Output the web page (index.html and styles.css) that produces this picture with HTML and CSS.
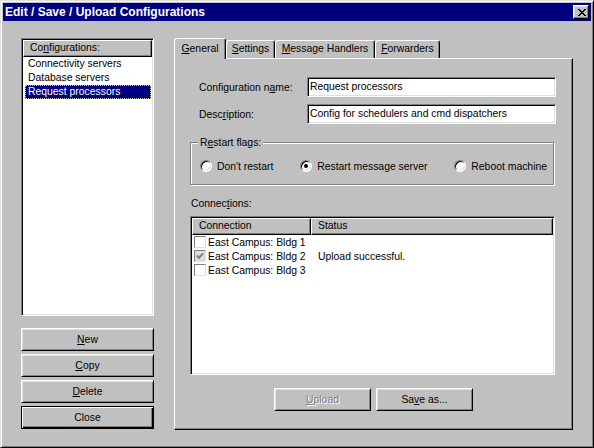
FILE: index.html
```html
<!DOCTYPE html>
<html>
<head>
<meta charset="utf-8">
<title>Edit / Save / Upload Configurations</title>
<link rel="stylesheet" href="styles.css">
</head>
<body>
<div class="window">
  <div class="titlebar">
    <span class="title">Edit / Save / Upload Configurations</span>
    <span class="close-btn"><svg width="8" height="7" viewBox="0 0 8 7" shape-rendering="crispEdges"><path fill="#000" d="M0 0h2v1H0z M6 0h2v1H6z M1 1h2v1H1z M5 1h2v1H5z M2 2h4v1H2z M3 3h2v1H3z M2 4h4v1H2z M1 5h2v1H1z M5 5h2v1H5z M0 6h2v1H0z M6 6h2v1H6z"/></svg></span>
  </div>
  <div class="content">
    <div class="left">
      <div class="listbox">
        <div class="lb-header">Co<u>n</u>figurations:</div>
        <div class="lb-item">Connectivity servers</div>
        <div class="lb-item">Database servers</div>
        <div class="lb-item selected">Request processors</div>
      </div>
      <div class="btn-stack">
        <div class="btn"><u>N</u>ew</div>
        <div class="btn"><u>C</u>opy</div>
        <div class="btn"><u>D</u>elete</div>
        <div class="btn default">Close</div>
      </div>
    </div>
    <div class="tabctl">
      <div class="tabs">
        <div class="tab active tab-general"><u>G</u>eneral</div>
        <div class="tab tab-settings"><u>S</u>ettings</div>
        <div class="tab tab-handlers"><u>M</u>essage Handlers</div>
        <div class="tab tab-forwarders"><u>F</u>orwarders</div>
      </div>
      <div class="panel">
        <div class="field-row first">
          <span class="field-label">Configuration n<u>a</u>me:</span>
          <span class="textbox">Request processors</span>
        </div>
        <div class="field-row">
          <span class="field-label">Desc<u>r</u>iption:</span>
          <span class="textbox">Config for schedulers and cmd dispatchers</span>
        </div>
        <div class="group">
          <div class="group-label">R<u>e</u>start flags:</div>
          <div class="radio-row">
            <span class="radio-item"><span class="radio"></span>Don't restart</span>
            <span class="radio-item"><span class="radio checked"></span>Restart message server</span>
            <span class="radio-item"><span class="radio"></span>Reboot machine</span>
          </div>
        </div>
        <div class="conn-label">Connec<u>t</u>ions:</div>
        <div class="listview">
          <div class="lv-header">
            <div class="lv-hcell">Connection</div>
            <div class="lv-hcell">Status</div>
          </div>
          <div class="lv-row">
            <div class="lv-cell first"><span class="check"></span>East Campus: Bldg 1</div>
            <div class="lv-cell second"></div>
          </div>
          <div class="lv-row">
            <div class="lv-cell first"><span class="check checked"><svg width="8" height="8" viewBox="0 0 8 8"><polyline points="0.8,3.6 3,5.8 7.2,1.4" fill="none" stroke="#808080" stroke-width="2"/></svg></span>East Campus: Bldg 2</div>
            <div class="lv-cell second">Upload successful.</div>
          </div>
          <div class="lv-row">
            <div class="lv-cell first"><span class="check"></span>East Campus: Bldg 3</div>
            <div class="lv-cell second"></div>
          </div>
        </div>
        <div class="panel-buttons">
          <div class="btn wide disabled"><u>U</u>pload</div>
          <div class="btn wide">Sa<u>v</u>e as...</div>
        </div>
      </div>
    </div>
  </div>
</div>
</body>
</html>
```
FILE: styles.css
```css
* { box-sizing: border-box; }
html, body { margin: 0; padding: 0; }
body {
  background: #c0c0c0;
  font-family: "Liberation Sans", Arial, sans-serif;
  font-size: 10.4px;
  color: #000;
}
u { text-decoration: underline; text-underline-offset: 1px; }

.window {
  width: 594px;
  height: 448px;
  border: 1px solid;
  border-color: #dfdfdf #000 #000 #dfdfdf;
  box-shadow: inset 1px 1px #fff, inset -1px -1px #808080;
  padding: 2px;
  display: flex;
  flex-direction: column;
  background: #c0c0c0;
}

.titlebar {
  height: 18px;
  background: #000080;
  display: flex;
  align-items: center;
  justify-content: space-between;
  padding: 0 2px;
}
.title {
  color: #fff;
  font-weight: bold;
  font-size: 12px;
  line-height: 18px;
}
.close-btn {
  width: 16px;
  height: 14px;
  background: #c0c0c0;
  border: 1px solid;
  border-color: #fff #000 #000 #fff;
  box-shadow: inset -1px -1px #808080, inset 1px 1px #dfdfdf;
  display: flex;
  align-items: center;
  justify-content: center;
  padding-left: 1px;
}
.close-btn svg { display: block; }

.content {
  display: flex;
  gap: 20px;
  padding: 17px 0 0 18px;
}

.left {
  width: 133px;
  display: flex;
  flex-direction: column;
}

.listbox {
  height: 278px;
  background: #fff;
  border: 1px solid;
  border-color: #808080 #fff #fff #808080;
  box-shadow: inset 1px 1px #000, inset -1px -1px #dfdfdf;
  padding: 1px;
}
.lb-header {
  height: 17px;
  background: #c0c0c0;
  border: 1px solid;
  border-color: #fff #000 #000 #fff;
  box-shadow: inset -1px -1px #808080;
  padding-left: 6px;
  line-height: 14px;
}
.lb-item {
  height: 14px;
  margin: 0 1px 0 2px;
  border: 1px dotted transparent;
  padding-left: 2px;
  line-height: 12px;
  white-space: nowrap;
}
.lb-item.selected {
  background: #000080;
  color: #fff;
  border-color: #c8c8a0;
}

.btn-stack {
  margin-top: 12px;
  display: flex;
  flex-direction: column;
  gap: 3px;
}
.btn {
  height: 23px;
  background: #c0c0c0;
  border: 1px solid;
  border-color: #fff #000 #000 #fff;
  box-shadow: inset 1px 1px #dfdfdf, inset -1px -1px #808080;
  display: flex;
  align-items: center;
  justify-content: center;
  white-space: nowrap;
}
.btn.default {
  border-color: #000;
  box-shadow: inset 1px 1px #fff, inset -1px -1px #000, inset -2px -2px #808080;
}
.btn.wide { width: 97px; }
.btn.disabled {
  color: #808080;
  text-shadow: 1px 1px #fff;
}

.tabctl {
  width: 399px;
  display: flex;
  flex-direction: column;
}
.tabs {
  height: 20px;
  display: flex;
  align-items: flex-end;
}
.tab {
  height: 18px;
  background: #c0c0c0;
  border-left: 1px solid #fff;
  border-top: 1px solid #fff;
  border-right: 1px solid #000;
  box-shadow: inset -1px 0 #808080;
  border-radius: 3px 3px 0 0;
  text-align: center;
  line-height: 14px;
  padding-top: 1px;
  white-space: nowrap;
}
.tab.active {
  height: 21px;
  margin-bottom: -1px;
  position: relative;
  z-index: 1;
  padding-top: 3px;
}
.tab-general { width: 52px; }
.tab-settings { width: 49px; }
.tab-handlers { width: 100px; }
.tab-forwarders { width: 65px; }

.panel {
  height: 372px;
  border: 1px solid;
  border-color: #fff #000 #000 #fff;
  box-shadow: inset -1px -1px #808080;
  display: flex;
  flex-direction: column;
}

.field-row {
  display: flex;
  align-items: center;
  margin: 7px 0 0 24px;
}
.field-row.first { margin-top: 18px; }
.field-label { width: 108px; white-space: nowrap; }
.textbox {
  width: 249px;
  height: 20px;
  background: #fff;
  border: 1px solid;
  border-color: #808080 #fff #fff #808080;
  box-shadow: inset 1px 1px #000, inset -1px -1px #dfdfdf;
  padding-left: 2px;
  line-height: 18px;
  white-space: nowrap;
  overflow: hidden;
}

.group {
  margin: 18px 0 0 15px;
  width: 364px;
  border: 1px solid #808080;
  box-shadow: inset 1px 1px #fff, 1px 1px #fff;
  padding-bottom: 11px;
}
.group-label {
  width: fit-content;
  margin: -7px 0 0 7px;
  padding: 0 2px;
  background: #c0c0c0;
  line-height: 13px;
}
.radio-row {
  margin-top: 10px;
  height: 14px;
  display: flex;
  justify-content: space-between;
  padding: 0 6px 0 9px;
}
.radio-item {
  display: flex;
  align-items: center;
  gap: 5px;
  white-space: nowrap;
}
.radio {
  width: 12px;
  height: 12px;
  border-radius: 50%;
  background: #fff;
  border: 1px solid;
  border-color: #808080 #fff #fff #808080;
  box-shadow: inset 1px 1px #000, inset -1px -1px #dfdfdf;
  display: flex;
  align-items: center;
  justify-content: center;
}
.radio.checked::after {
  content: "";
  width: 4px;
  height: 4px;
  border-radius: 50%;
  background: #000;
}

.conn-label {
  margin: 12px 0 0 16px;
  line-height: 13px;
}
.listview {
  margin: 6px 0 0 15px;
  width: 365px;
  height: 159px;
  background: #fff;
  border: 1px solid;
  border-color: #808080 #fff #fff #808080;
  box-shadow: inset 1px 1px #000, inset -1px -1px #dfdfdf;
  padding: 1px;
}
.lv-header {
  display: grid;
  grid-template-columns: 119px 1fr;
  height: 17px;
}
.lv-hcell {
  background: #c0c0c0;
  border: 1px solid;
  border-color: #fff #000 #000 #fff;
  box-shadow: inset -1px -1px #808080;
  padding-left: 6px;
  line-height: 14px;
}
.lv-row {
  display: grid;
  grid-template-columns: 119px 1fr;
  height: 14px;
}
.lv-cell {
  display: flex;
  align-items: center;
  white-space: nowrap;
}
.lv-cell.first { padding-left: 2px; gap: 2px; }
.lv-cell.second { padding-left: 7px; }
.check {
  width: 12px;
  height: 12px;
  background: #fff;
  border: 1px solid;
  border-color: #808080 #dfdfdf #dfdfdf #808080;
  display: flex;
  align-items: center;
  justify-content: center;
}
.check.checked { background: #dcdcdc; }
.check svg { display: block; }

.panel-buttons {
  margin-top: 13px;
  display: flex;
  justify-content: center;
  gap: 5px;
}
```
